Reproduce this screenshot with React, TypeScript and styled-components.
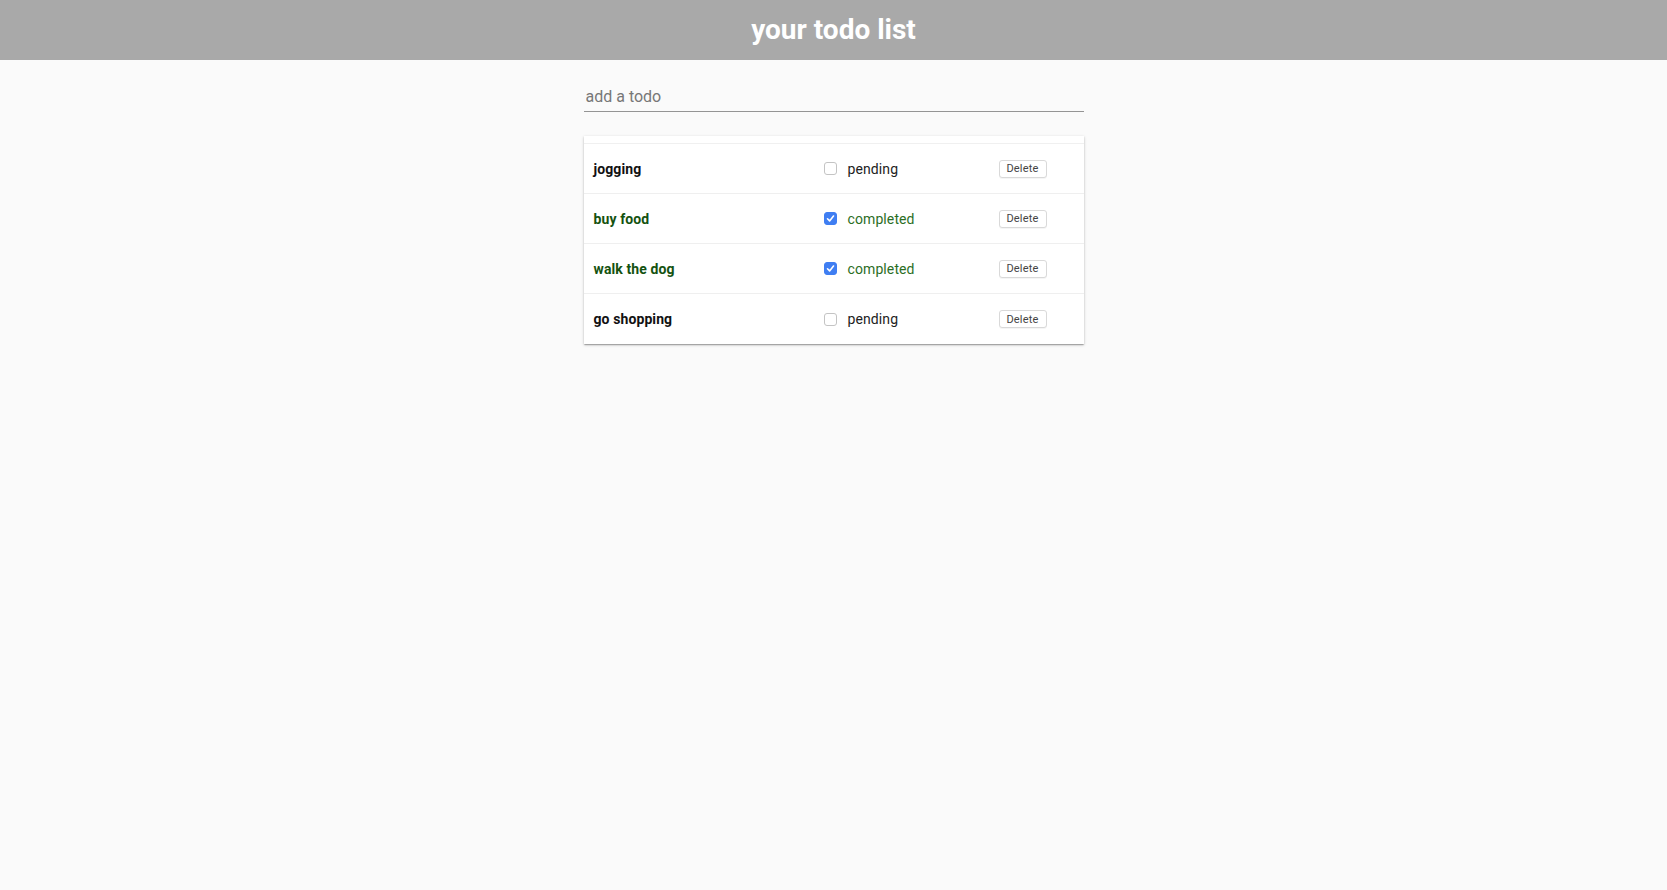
import React, { useState } from "react";
import styled, { createGlobalStyle } from "styled-components";

const GlobalStyle = createGlobalStyle`
  html, body { margin: 0; padding: 0; }
  body {
    background: #fafafa;
    font-family: Roboto, "Noto Sans", "Liberation Sans", sans-serif;
    min-height: 890px;
  }
`;

const Header = styled.header`
  height: 60px;
  background: #a9a9a9;
  display: flex;
  align-items: center;
  justify-content: center;
`;

const Title = styled.h1`
  margin: 0;
  color: #ffffff;
  font-size: 28px;
  font-weight: 700;
  line-height: 1;
  padding-bottom: 1px;
`;

const Main = styled.main`
  width: 500px;
  margin: 0 auto;
  padding-top: 21px;
`;

const TodoInput = styled.input`
  display: block;
  box-sizing: border-box;
  width: 100%;
  height: 31px;
  border: none;
  border-bottom: 1px solid #949494;
  background: transparent;
  padding: 0 2px;
  font-family: inherit;
  font-size: 16px;
  color: #222;
  outline: none;
  &::placeholder { color: #777777; }
`;

const Paper = styled.section`
  margin-top: 24px;
  background: #ffffff;
  box-shadow: 0 1px 3px rgba(0, 0, 0, 0.2), 0 1px 1px rgba(0, 0, 0, 0.14),
    0 2px 1px -1px rgba(0, 0, 0, 0.12);
`;

const HeadStrip = styled.div`
  height: 7px;
  border-bottom: 1px solid #f0f0f0;
`;

const Row = styled.div`
  display: grid;
  grid-template-columns: 230px 175px 1fr;
  align-items: center;
  height: 50px;
  box-sizing: border-box;
  border-bottom: 1px solid #efefef;
  &:last-child { border-bottom: none; }
`;

const Cell = styled.div`
  padding: 0 10px;
  display: flex;
  align-items: center;
`;

const Name = styled.span<{ $done: boolean }>`
  font-size: 14px;
  font-weight: 700;
  letter-spacing: 0.1px;
  color: ${(p) => (p.$done ? "#14520f" : "#111111")};
`;

const Box = styled.span<{ $checked: boolean }>`
  width: 13px;
  height: 13px;
  box-sizing: border-box;
  border-radius: 3px;
  border: 1px solid ${(p) => (p.$checked ? "#3f7ef2" : "#c4c4c4")};
  background: ${(p) => (p.$checked ? "#3f7ef2" : "#ffffff")};
  display: inline-flex;
  align-items: center;
  justify-content: center;
  cursor: pointer;
`;

const Status = styled.span<{ $done: boolean }>`
  margin-left: 11px;
  font-size: 14px;
  letter-spacing: 0.1px;
  color: ${(p) => (p.$done ? "#2c6e1f" : "#222222")};
`;

const DeleteButton = styled.button`
  height: 18px;
  padding: 0;
  width: 48px;
  box-sizing: border-box;
  background: #ffffff;
  border: 1px solid #d9d9d9;
  border-radius: 3px;
  font-family: inherit;
  font-size: 11px;
  letter-spacing: 0.2px;
  color: #444444;
  cursor: pointer;
  box-shadow: 0 1px 0 rgba(0, 0, 0, 0.04);
`;

type Todo = { name: string; done: boolean };

const initial: Todo[] = [
  { name: "jogging", done: false },
  { name: "buy food", done: true },
  { name: "walk the dog", done: true },
  { name: "go shopping", done: false },
];

export default function App() {
  const [todos, setTodos] = useState<Todo[]>(initial);
  const toggle = (i: number) =>
    setTodos((t) => t.map((x, j) => (j === i ? { ...x, done: !x.done } : x)));
  return (
    <>
      <GlobalStyle />
      <Header>
        <Title>your todo list</Title>
      </Header>
      <Main>
        <TodoInput placeholder="add a todo" />
        <Paper>
          <HeadStrip />
          {todos.map((t, i) => (
            <Row key={t.name}>
              <Cell>
                <Name $done={t.done}>{t.name}</Name>
              </Cell>
              <Cell>
                <Box $checked={t.done} onClick={() => toggle(i)}>
                  {t.done && (
                    <svg width="9" height="9" viewBox="0 0 9 9">
                      <path d="M1.5 4.8 L3.6 6.9 L7.5 2" fill="none" stroke="#fff" strokeWidth="1.6" strokeLinecap="round" strokeLinejoin="round" />
                    </svg>
                  )}
                </Box>
                <Status $done={t.done}>{t.done ? "completed" : "pending"}</Status>
              </Cell>
              <Cell>
                <DeleteButton>Delete</DeleteButton>
              </Cell>
            </Row>
          ))}
        </Paper>
      </Main>
    </>
  );
}
